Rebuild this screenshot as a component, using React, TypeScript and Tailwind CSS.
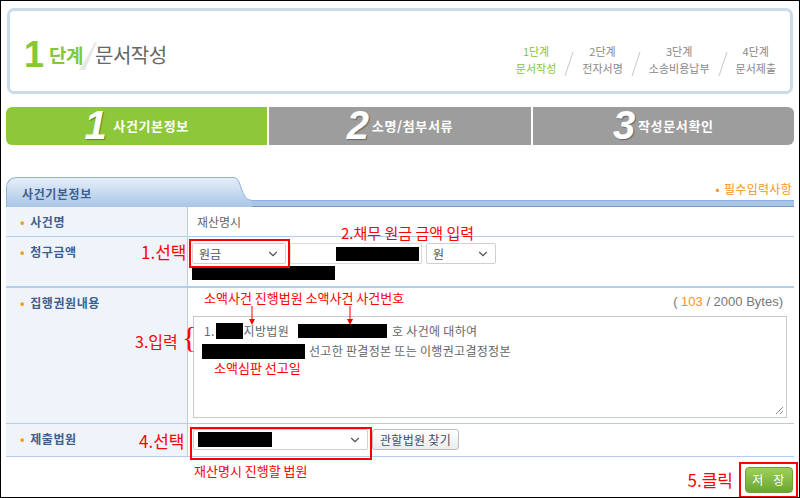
import React from 'react';
import { ChevronDown } from 'lucide-react';

const KR = '"Noto Sans CJK KR", "Noto Sans", sans-serif';

const Slash = ({ h = 24 }: { h?: number }) => (
  <svg width="10" height={h} viewBox={`0 0 10 ${h}`}>
    <line x1="9" y1="1" x2="1" y2={h - 1} stroke="#c8c8c8" strokeWidth="1" />
  </svg>
);

const steps = [
  { top: '1단계', bottom: '문서작성', active: true },
  { top: '2단계', bottom: '전자서명' },
  { top: '3단계', bottom: '소송비용납부' },
  { top: '4단계', bottom: '문서제출' },
];

const Header = () => (
  <div className="mx-[6px] mt-[7px] h-[86px] rounded-[7px] border-[3px] border-[#cadcea] flex justify-between px-[14px]">
    <div className="flex items-center pt-[8px]">
      <span className="text-[36px] leading-none text-[#86c63a] font-['Liberation_Sans'] font-bold">1</span>
      <span className="ml-[5px] text-[19px] font-bold text-[#86c63a] tracking-tight">단계</span>
      <svg width="18" height="30" viewBox="0 0 18 30" className="-ml-[4px]">
        <defs>
          <linearGradient id="sl" x1="0" y1="0" x2="1" y2="1">
            <stop offset="0" stopColor="#ffffff" />
            <stop offset="1" stopColor="#d6d6d6" />
          </linearGradient>
        </defs>
        <polygon points="16,2 18,2 6,30 0,30" fill="url(#sl)" />
      </svg>
      <span className="-ml-[2px] text-[20px] text-[#666] tracking-tight">문서작성</span>
    </div>
    <div className="flex items-end pb-[14px] gap-[8px] text-[11px] leading-[17px] text-[#888]">
      {steps.map((s, i) => (
        <React.Fragment key={s.top}>
          {i > 0 && <Slash h={26} />}
          <div className={`flex flex-col items-center ${s.active ? 'text-[#86c63a]' : ''}`}>
            <span>{s.top}</span>
            <span>{s.bottom}</span>
          </div>
        </React.Fragment>
      ))}
    </div>
  </div>
);

const TabNum = ({ n }: { n: string }) => (
  <span
    className="text-[40px] leading-none italic font-bold text-white font-['Liberation_Sans'] -mt-[2px]"
    style={{ textShadow: '1px 1px 1px rgba(0,0,0,0.35)' }}
  >
    {n}
  </span>
);

const Tabs = () => (
  <div className="mx-[5px] mt-[13px] h-[38px] flex gap-[2px] text-white text-[13px] font-bold tracking-wider">
    <div className="flex-1 bg-[#8cc83a] rounded-l-[6px] flex items-center justify-center gap-[6px]">
      <TabNum n="1" />
      <span>사건기본정보</span>
    </div>
    <div className="flex-1 bg-[#9d9d9d] flex items-center justify-center gap-[2px]">
      <TabNum n="2" />
      <span>소명/첨부서류</span>
    </div>
    <div className="flex-1 bg-[#9d9d9d] rounded-r-[6px] flex items-center justify-center gap-[2px]">
      <TabNum n="3" />
      <span>작성문서확인</span>
    </div>
  </div>
);

const SectionHead = () => (
  <div className="mx-[5px] mt-[32px] h-[30px] flex">
    <div className="w-[228px] h-full rounded-tl-[10px] border-l border-t border-[#8fb0d8] bg-gradient-to-b from-[#e6eff9] to-[#a9c5e6] flex items-center pl-[15px] pt-[3px] text-[12px] font-bold text-[#3d5f91] tracking-wider">
      사건기본정보
    </div>
    <svg width="18" height="30" viewBox="0 0 18 30" className="shrink-0">
      <defs>
        <linearGradient id="tabg" x1="0" y1="0" x2="0" y2="1">
          <stop offset="0" stopColor="#e6eff9" />
          <stop offset="1" stopColor="#a9c5e6" />
        </linearGradient>
      </defs>
      <path d="M0 0.5 C8 0.5 6 23.5 18 23.5 L18 30 L0 30 Z" fill="url(#tabg)" />
      <path d="M0 0.5 C8 0.5 6 23.5 18 23.5" fill="none" stroke="#8fb0d8" strokeWidth="1" />
    </svg>
    <div className="flex-1 flex flex-col">
      <div className="flex-1 flex items-center justify-end pr-[2px] text-[12px] text-[#f7941d] tracking-wide">
        <span className="mr-[4px]">•</span>필수입력사항
      </div>
      <div className="h-[7px] bg-[#a9c5e6] border-t border-[#8fb0d8] border-b border-b-[#7699c9]" />
    </div>
  </div>
);

const Label = ({ children }: { children: React.ReactNode }) => (
  <div className="w-[182px] shrink-0 bg-[#eff4fb] border-r border-[#b5cde8] pl-[14px] pt-[6px] text-[12px] leading-[18px] font-bold text-[#3d5f91] tracking-wider">
    <span className="text-[#f39c26] mr-[5px]">•</span>
    {children}
  </div>
);

const Select = ({ w, children }: { w: string; children: React.ReactNode }) => (
  <div className={`${w} h-[21px] border border-[#cfcfcf] rounded-[2px] bg-white flex items-center justify-between pl-[6px] pr-[5px] text-[12px] text-[#555]`}>
    <div className="flex items-center">{children}</div>
    <ChevronDown size={14} strokeWidth={2} className="text-[#555]" />
  </div>
);

const Table = () => (
  <div className="mx-[5px] flex flex-col text-[12px]">
    <div className="h-[30px] flex border-b border-[#b5cde8]">
      <Label>사건명</Label>
      <div className="pl-[9px] pt-[6px] leading-[18px] text-[#666]">재산명시</div>
    </div>
    <div className="h-[51px] flex border-b-2 border-[#b5cde8]">
      <Label>청구금액</Label>
      <div className="pl-[4px] pt-[6px] flex flex-col gap-[2px]">
        <div className="flex items-center gap-[4px]">
          <Select w="w-[94px]">원금</Select>
          <div className="w-[132px] h-[21px] border border-[#dcdcdc] flex items-center justify-end pr-[2px]">
            <div className="w-[83px] h-[14px] bg-black" />
          </div>
          <Select w="w-[70px]">원</Select>
        </div>
        <div className="w-[143px] h-[14px] bg-black" />
      </div>
    </div>
    <div className="h-[136px] flex border-b border-[#b5cde8]">
      <Label>집행권원내용</Label>
      <div className="flex-1 flex flex-col pl-[5px] pr-[7px]">
        <div className="h-[28px] flex items-center justify-end pr-[4px] text-[13px] text-[#777] font-['Liberation_Sans']">
          (&nbsp;<span className="text-[#f7941d]">103</span>&nbsp;/ 2000 Bytes)
        </div>
        <div className="relative h-[102px] border border-[#c9c9c9] bg-white pl-[10px] pt-[4px] text-[12px] leading-[20px] text-[#666] tracking-wide">
          <div className="flex items-center">
            <span>1.</span>
            <span className="ml-[1px] w-[27px] h-[16px] bg-black" />
            <span className="ml-[1px]">지방법원</span>
            <span className="ml-[9px] w-[89px] h-[14px] bg-black" />
            <span className="ml-[5px]">호 사건에 대하여</span>
          </div>
          <div className="flex items-center -ml-[2px]">
            <span className="w-[103px] h-[15px] bg-black" />
            <span className="ml-[4px]">선고한 판결정본 또는 이행권고결정정본</span>
          </div>
          <svg width="10" height="10" viewBox="0 0 10 10" className="absolute right-[2px] bottom-[2px]">
            <line x1="9" y1="2" x2="2" y2="9" stroke="#888" strokeWidth="1" />
            <line x1="9" y1="6" x2="6" y2="9" stroke="#888" strokeWidth="1" />
          </svg>
        </div>
      </div>
    </div>
    <div className="h-[33px] flex border-b border-[#b5cde8]">
      <Label>제출법원</Label>
      <div className="pl-[5px] pt-[5px] flex items-start gap-[4px]">
        <Select w="w-[175px]">
          <span className="w-[74px] h-[15px] bg-black -ml-[2px]" />
        </Select>
        <div className="h-[21px] px-[7px] border border-[#bdbdbd] rounded-[3px] bg-gradient-to-b from-white to-[#ececec] flex items-center text-[12px] text-[#3d4f6a] tracking-wide">
          관할법원 찾기
        </div>
      </div>
    </div>
  </div>
);

const Footer = () => (
  <div className="flex justify-end items-center mt-[5px] mr-[1px]">
    <span className="text-[17px] text-[#ff0000] mr-[6px]">5.클릭</span>
    <div className="w-[59px] h-[36px] border-2 border-[#ff0000] flex items-center justify-center">
      <div className="w-[48px] h-[26px] rounded-[4px] bg-gradient-to-b from-[#9fd05a] to-[#6aa630] border border-[#6a9f36] flex items-center justify-center text-[12px] text-white tracking-[0.3em] pl-[3px]">
        저 장
      </div>
    </div>
  </div>
);

export default function App() {
  return (
    <div
      className="relative w-[800px] h-[498px] border border-black bg-white overflow-hidden"
      style={{ fontFamily: KR }}
    >
      <Header />
      <Tabs />
      <SectionHead />
      <Table />
      <Footer />

      {/* annotations */}
      <div className="absolute left-[188px] top-[238px] w-[101px] h-[29px] border-2 border-[#ff0000]" />
      <span className="absolute left-[140px] top-[240px] text-[17px] leading-[22px] text-[#ff0000]">1.선택</span>
      <span className="absolute left-[340px] top-[222px] text-[15px] leading-[20px] text-[#ff0000]">2.채무 원금 금액 입력</span>

      <span className="absolute left-[203px] top-[288px] text-[13px] leading-[18px] text-[#ff0000]">소액사건 진행법원 소액사건 사건번호</span>
      <svg className="absolute left-[246px] top-[305px]" width="10" height="20" viewBox="0 0 10 20">
        <line x1="5" y1="0" x2="5" y2="15" stroke="#ff0000" strokeWidth="1" />
        <polygon points="2,13 8,13 5,19" fill="#ff0000" />
      </svg>
      <svg className="absolute left-[344px] top-[305px]" width="10" height="20" viewBox="0 0 10 20">
        <line x1="5" y1="0" x2="5" y2="15" stroke="#ff0000" strokeWidth="1" />
        <polygon points="2,13 8,13 5,19" fill="#ff0000" />
      </svg>
      <span className="absolute left-[134px] top-[329px] text-[16px] leading-[22px] text-[#ff0000]">3.입력</span>
      <span className="absolute left-[181px] top-[316px] text-[30px] leading-[40px] text-[#ff0000] font-['Liberation_Serif']">{'{'}</span>
      <span className="absolute left-[213px] top-[358px] text-[13px] leading-[18px] text-[#ff0000]">소액심판 선고일</span>

      <div className="absolute left-[189px] top-[426px] w-[182px] h-[33px] border-2 border-[#ff0000]" />
      <span className="absolute left-[138px] top-[429px] text-[17px] leading-[22px] text-[#ff0000]">4.선택</span>
      <span className="absolute left-[193px] top-[461px] text-[13px] leading-[18px] text-[#ff0000]">재산명시 진행할 법원</span>
    </div>
  );
}
